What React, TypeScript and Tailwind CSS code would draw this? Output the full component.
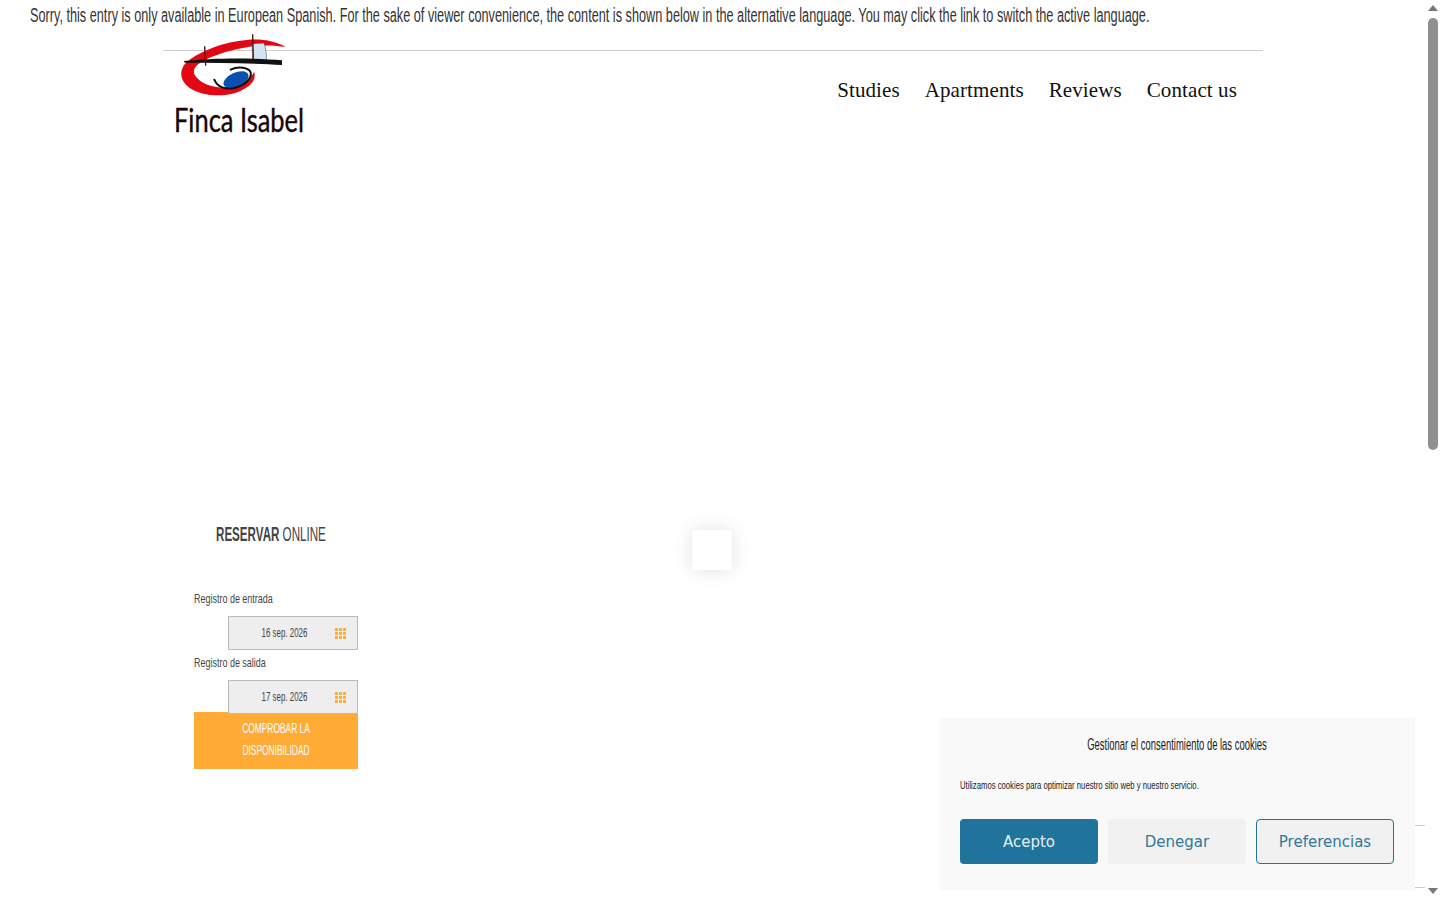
const narrow = { fontFamily: "'Liberation Sans', sans-serif" };

const Logo = () => (
  <div className="relative w-[160px] h-[120px] shrink-0">
    <svg viewBox="0 0 480 360" width="160" height="120" className="block">
      <path d="M377 66C340 44 290 38 235 48C170 58 105 88 80 112C56 134 58 166 88 188C120 210 180 218 225 204C268 190 292 165 282 140C276 158 250 178 205 186C165 192 122 178 104 150C94 128 116 114 152 97C200 77 290 50 377 66Z" fill="#e30613" />
      <path d="M276 56L312 54C318 70 320 90 319 106L278 106Z" fill="#d5e3f5" stroke="#333" strokeWidth="1.5" />
      <path d="M72 108C160 98 280 98 366 106L366 120C280 114 170 114 74 113Z" fill="#111" />
      <path d="M134 64L137 122" stroke="#4a0a10" strokeWidth="4" fill="none" />
      <path d="M278 28L280 106" stroke="#4a0a10" strokeWidth="4" fill="none" />
      <ellipse cx="228" cy="164" rx="40" ry="21" transform="rotate(-24 228 164)" fill="#0b4fb3" />
      <path d="M163 164C172 186 196 196 226 188C256 180 276 160 272 142C266 128 236 122 212 134" stroke="#111" strokeWidth="6" fill="none" strokeLinecap="round" />
    </svg>
    <span className="absolute left-[14px] top-[77px] text-[32px] leading-[36px] text-[#1a0508] whitespace-nowrap origin-left scale-x-[0.795] [-webkit-text-stroke:0.4px_#1a0508]" style={{ fontFamily: "'Lato', sans-serif" }}>
      Finca Isabel
    </span>
  </div>
);

const GridIcon = () => (
  <svg width="11" height="11" viewBox="0 0 11 11" fill="#f9ae3f" className="shrink-0">
    {[0, 4, 8].map((y) => [0, 4, 8].map((x) => <rect key={`${x}-${y}`} x={x} y={y} width="3" height="3" />))}
  </svg>
);

const DateField = ({ label, value }: { label: string; value: string }) => (
  <div>
    <div className="h-[30px] pt-[4px] text-[13px] leading-[18px] text-[#444] whitespace-nowrap origin-left scale-x-[0.69]" style={narrow}>
      {label}
    </div>
    <div className="relative z-10 ml-[34px] h-[34px] w-[130px] border border-[#bbb] bg-[#eee] flex items-center pl-[5px] pr-[11px]">
      <span className="flex-1 text-center text-[12px] text-[#444] whitespace-nowrap scale-x-[0.66]" style={narrow}>
        {value}
      </span>
      <GridIcon />
    </div>
  </div>
);

const App = () => {
  return (
    <div className="relative h-[900px] w-[1440px] overflow-hidden bg-white">
      <div className="pl-[30px] pt-[3px] h-[50px]">
        <p className="inline-block text-[20px] leading-[24px] text-[#333] whitespace-nowrap origin-left scale-x-[0.635]" style={narrow}>
          Sorry, this entry is only available in European Spanish. For the sake of viewer convenience, the content is shown below in the alternative language. You may click the link to switch the active language.
        </p>
      </div>

      <header className="ml-[163px] w-[1100px] h-[472px] border-t border-[#ccc]">
        <div className="flex items-start justify-between pr-[26px]">
          <div className="-mt-[26px] -ml-[3px]"><Logo /></div>
          <nav className="flex gap-[25px] pt-[26px] text-[21px] leading-[26px] tracking-[0.1px] text-[#111]" style={{ fontFamily: "'Liberation Serif', serif" }}>
            <a>Studies</a>
            <a>Apartments</a>
            <a>Reviews</a>
            <a>Contact us</a>
          </nav>
        </div>
      </header>

      <section className="ml-[194px] w-[164px]">
        <div className="h-[64px] pl-[22px]">
          <h2 className="inline-block text-[20px] leading-[24px] text-[#444] whitespace-nowrap origin-left scale-x-[0.58]" style={narrow}>
            <b>RESERVAR</b> ONLINE
          </h2>
        </div>
        <DateField label="Registro de entrada" value="16 sep. 2026" />
        <DateField label="Registro de salida" value="17 sep. 2026" />
        <button className="-mt-[2px] block h-[57px] w-[164px] bg-[#ffab36] pb-[4px] text-center text-[14px] leading-[22px] text-white" style={narrow}>
          <span className="block scale-x-[0.6]">COMPROBAR LA</span>
          <span className="block scale-x-[0.6]">DISPONIBILIDAD</span>
        </button>
      </section>

      <div className="absolute left-[692px] top-[530px] h-[40px] w-[40px] rounded-[3px] bg-white shadow-[0_0_20px_rgba(0,0,0,0.12)]" />

      <div className="absolute left-[1415px] top-[825px] h-[1px] w-[10px] bg-[#ccc]" />
      <div className="absolute left-[1415px] top-[887px] h-[1px] w-[10px] bg-[#ccc]" />

      <aside className="absolute left-[939px] top-[718px] h-[172px] w-[476px] bg-[#f9f9f9] px-[21px] pt-[17px]">
        <h3 className="text-center text-[16px] leading-[20px] text-[#222] whitespace-nowrap scale-x-[0.59]" style={narrow}>
          Gestionar el consentimiento de las cookies
        </h3>
        <p className="mt-[21px] text-[11px] leading-[18px] text-[#222] whitespace-nowrap origin-left scale-x-[0.7]" style={narrow}>
          Utilizamos cookies para optimizar nuestro sitio web y nuestro servicio.
        </p>
        <div className="mt-[25px] flex gap-[10px]" style={{ fontFamily: "'DejaVu Sans', sans-serif" }}>
          <button className="h-[45px] w-[138px] rounded-[4px] bg-[#20739a] pt-[1px] text-[15px] text-[#e6f0f5]">Acepto</button>
          <button className="h-[45px] w-[138px] rounded-[4px] bg-[#f1f1f1] pt-[1px] text-[15px] text-[#33779b]">Denegar</button>
          <button className="h-[45px] w-[138px] rounded-[4px] border border-[#20739a] bg-[#f1f1f1] pt-[1px] text-[15px] text-[#33779b]">Preferencias</button>
        </div>
      </aside>

      <div className="absolute right-0 top-0 h-[900px] w-[14px] bg-white">
        <div className="absolute left-[2px] top-[5px] h-0 w-0 border-x-[5px] border-b-[6px] border-x-transparent border-b-[#777]" />
        <div className="absolute left-[2px] top-[18px] h-[432px] w-[10px] rounded-[5px] bg-[#8f8f8f]" />
        <div className="absolute left-[2px] top-[888px] h-0 w-0 border-x-[5px] border-t-[6px] border-x-transparent border-t-[#777]" />
      </div>
    </div>
  );
};

export default App;
